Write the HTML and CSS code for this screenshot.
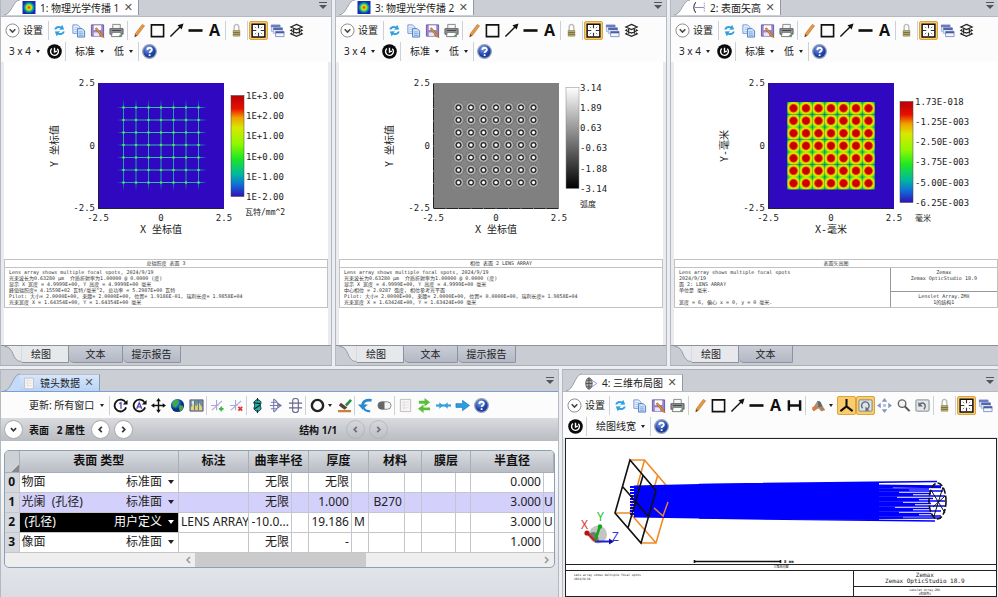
FILE: index.html
```html
<!DOCTYPE html>
<html lang="zh-CN">
<head>
<meta charset="utf-8">
<meta name="viewport" content="width=device-width, initial-scale=1">
<title>OpticStudio</title>
<link rel="stylesheet" href="styles.css">
</head>
<body>
<svg class="defs" aria-hidden="true">
  <defs>
    <radialGradient id="spot"><stop offset="0" stop-color="#d22"/><stop offset=".2" stop-color="#f80"/><stop offset=".4" stop-color="#ce0"/><stop offset=".65" stop-color="#0b9"/><stop offset="1" stop-color="#1a2bb5"/></radialGradient>
    <radialGradient id="ball" cx=".4" cy=".3"><stop offset="0" stop-color="#7fa2ee"/><stop offset="1" stop-color="#1c3fa4"/></radialGradient>
    <radialGradient id="earth" cx=".35" cy=".3"><stop offset="0" stop-color="#9be3ff"/><stop offset=".5" stop-color="#1f78d0"/><stop offset="1" stop-color="#0a2f80"/></radialGradient>
    <linearGradient id="rainbow" x2="0" y2="1"><stop offset="0" stop-color="#b80008"/><stop offset=".13" stop-color="#e81000"/><stop offset=".22" stop-color="#f0a000"/><stop offset=".32" stop-color="#d8e800"/><stop offset=".48" stop-color="#90f800"/><stop offset=".62" stop-color="#20e820"/><stop offset=".78" stop-color="#00b8a0"/><stop offset=".88" stop-color="#1070d8"/><stop offset="1" stop-color="#3010b8"/></linearGradient>
    <linearGradient id="gray" x2="0" y2="1"><stop offset="0" stop-color="#fff"/><stop offset="1" stop-color="#000"/></linearGradient>
    <linearGradient id="beamH" gradientUnits="userSpaceOnUse" x1="117" y1="0" x2="207" y2="0"><stop offset="0" stop-color="#08b8b8" stop-opacity="0"/><stop offset=".08" stop-color="#18a8b8"/><stop offset=".5" stop-color="#38c89c"/><stop offset=".92" stop-color="#18a8b8"/><stop offset="1" stop-color="#08b8b8" stop-opacity="0"/></linearGradient>
    <linearGradient id="beamV" gradientUnits="userSpaceOnUse" x1="0" y1="99" x2="0" y2="191"><stop offset="0" stop-color="#08b8b8" stop-opacity="0"/><stop offset=".1" stop-color="#1898c0"/><stop offset=".5" stop-color="#28a8a8"/><stop offset=".9" stop-color="#1898c0"/><stop offset="1" stop-color="#08b8b8" stop-opacity="0"/></linearGradient>
    <radialGradient id="lens" r=".707"><stop offset=".34" stop-color="#c80000"/><stop offset=".44" stop-color="#e83c00"/><stop offset=".52" stop-color="#f4c800"/><stop offset=".64" stop-color="#c8f000"/><stop offset=".78" stop-color="#60e010"/><stop offset="1" stop-color="#009880"/></radialGradient>

    <symbol id="i-chev" viewBox="0 0 16 16"><circle cx="8" cy="8" r="7" fill="#fff" stroke="#888"/><path d="M5 6.700l3 3 3-3" fill="none" stroke="#444" stroke-width="1.600"/></symbol>
    <symbol id="i-refresh" viewBox="0 0 16 16"><path d="M2.500 7c.5-3 4-4.800 7-3.200L11 2l2 5-5.500.2 1.500-1.500C7 4.800 5.500 5.200 4.500 7zM13.500 9c-.5 3-4 4.800-7 3.200L5 14 3 9l5.500-.2L7 10.300c2 .9 3.500.5 4.500-1.300z" fill="#2f9fe0"/></symbol>
    <symbol id="i-copy" viewBox="0 0 16 16"><path d="M2 2h5l2.500 2.500V11H2z" fill="#eaf3ff" stroke="#6a93cf"/><path d="M3.500 5h4M3.500 7h4M3.500 9h4" stroke="#a8c4e8"/><path d="M7 6h5l2.500 2.500V15H7z" fill="#cfe2fa" stroke="#4a7cc4"/><path d="M8.500 9.500h4M8.500 11.500h4.500M8.500 13.200h4.500" stroke="#7ea5dc"/></symbol>
    <symbol id="i-save" viewBox="0 0 16 16"><path d="M1.500 2h13v12h-13z" fill="#9a86c8" stroke="#6a5aa2"/><path d="M4 2.500h8v5H4z" fill="#fff"/><path d="M4 10h6v4H4z" fill="#e8e4f4"/><path d="M7 5l7 8.500 1 2-2.500-.8L5.500 6z" fill="#e69a3c" stroke="#9a5a24" stroke-width=".7"/></symbol>
    <symbol id="i-print" viewBox="0 0 16 16"><path d="M4 6V1.500h8V6" fill="#f6f6f6" stroke="#888"/><path d="M1 6h14v6H1z" fill="#8f9296" stroke="#5c5f63"/><path d="M3 8h10" stroke="#444"/><path d="M3.500 10h9l1 4.500h-11z" fill="#fff" stroke="#777"/><path d="M11 13.300h2" stroke="#3a3" stroke-width="1.500"/></symbol>
    <symbol id="i-pencil" viewBox="0 0 16 16"><path d="M12 1.500l2.500 1.500-7.500 10L4 15l.5-3.500z" fill="#e79a45" stroke="#b4661e" stroke-width=".6"/><path d="M4.500 12l2 1.300L4 15z" fill="#543"/></symbol>
    <symbol id="i-rect" viewBox="0 0 16 16"><path d="M1.500 2h13v12.500h-13z" fill="none" stroke="#111" stroke-width="1.700"/></symbol>
    <symbol id="i-arrow" viewBox="0 0 16 16"><path d="M1.500 14.500L12 4" stroke="#111" stroke-width="1.500"/><path d="M15.500.5l-2 6.500L9 2.500z" fill="#111"/></symbol>
    <symbol id="i-line" viewBox="0 0 16 16"><path d="M.5 8h15" stroke="#111" stroke-width="2.800"/></symbol>
    <symbol id="i-h" viewBox="0 0 16 16"><path d="M2 2.500v11M14 2.500v11M2 8h12" stroke="#111" stroke-width="2.600"/></symbol>
    <symbol id="i-lock" viewBox="0 0 16 16"><path d="M5.500 8V4.500a2.500 3 0 0 1 5 0V8" fill="none" stroke="#bbb" stroke-width="1.500"/><path d="M4.500 8h7v6h-7z" fill="#c2b46e" stroke="#8a8050" stroke-width=".7"/><path d="M4.500 10h7M4.500 12h7" stroke="#6a6340"/></symbol>
    <symbol id="i-fit" viewBox="0 0 16 16"><path d="M1.200 1.200h13.600v13.600H1.200z" fill="#fff" stroke="#111" stroke-width="1.600"/><path d="M8 2v3.600M8 10.400V14M2 8h3.600M10.400 8H14" stroke="#333" stroke-width="1.200"/><path d="M4 4l1.500 1.500M12 4l-1.500 1.500M4 12l1.500-1.500M12 12l-1.500-1.500" stroke="#777"/></symbol>
    <symbol id="i-win" viewBox="0 0 16 16"><path d="M1.500 2h9v7h-9z" fill="#eef2fb" stroke="#a6b3d8"/><path d="M1 2h10v2.500H1z" fill="#6a7cc0"/><path d="M3.500 5h9.500v6H3.500z" fill="#dfe6f6" stroke="#a6b3d8"/><path d="M3.500 5h10v2.500h-10z" fill="#5366ac"/><path d="M6 9h9v5.500H6z" fill="#f4f6fc" stroke="#8494c8"/><path d="M6 9h9v2H6z" fill="#485ca6"/></symbol>
    <symbol id="i-layers" viewBox="0 0 16 16"><path d="M8 1.500l6 2.800-6 2.800-6-2.800zM3.500 7L2 8l6 2.800L14 8l-1.500-1M3.500 10.500L2 11.500l6 2.800 6-2.800-1.500-1M5 6.500v5M11 6.500v5" fill="none" stroke="#222" stroke-width="1.300"/></symbol>
    <symbol id="i-auto" viewBox="0 0 16 16"><circle cx="8" cy="8" r="7.800" fill="#0a0a0a"/><path d="M5.200 4.800A4.200 4.200 0 1 0 11 5M8 4v4.500l2.500-1" fill="none" stroke="#fff" stroke-width="1.500"/></symbol>
    <symbol id="i-help" viewBox="0 0 16 16"><circle cx="8" cy="8" r="7.300" fill="url(#ball)" stroke="#98a2b8" stroke-width="1.300"/><path d="M5.700 6.300c0-3 4.800-3 4.800-.3 0 1.700-2.400 1.700-2.400 3.700M8.100 11v1.700" fill="none" stroke="#fff" stroke-width="1.900"/></symbol>
    <symbol id="i-spot" viewBox="0 0 16 16"><path d="M0 0h16v16H0z" fill="#1a2bb5"/><circle cx="8" cy="8" r="7.500" fill="url(#spot)"/></symbol>
    <symbol id="i-sag" viewBox="0 0 16 16"><path d="M4 1.500c-3 4-3 9 0 13" fill="none" stroke="#333" stroke-width="1.300"/><path d="M3 8h11" stroke="#6a6ad0"/><path d="M14.500 2v12" stroke="#888" stroke-dasharray="2 1"/></symbol>
    <symbol id="i-3d" viewBox="0 0 16 16"><ellipse cx="5.500" cy="8" rx="4" ry="7" fill="#aaa" stroke="#555"/><path d="M5.500 1v14M1.500 8h8M2.500 4h6M2.500 12h6" stroke="#444"/><path d="M8 3l7 5-7 5" fill="none" stroke="#8a7cd0"/></symbol>
    <symbol id="i-doc" viewBox="0 0 16 16"><path d="M2.500 1.500h11v13h-11z" fill="#f8f6f4" stroke="#bcbcc0"/><path d="M4 4.500h8M4 7.500h8M4 10.500h8M6.500 3v10" stroke="#e2dede"/></symbol>
    <symbol id="i-c1" viewBox="0 0 16 16"><path d="M13.500 5A6.300 6.300 0 1 0 14 10" fill="none" stroke="#111" stroke-width="1.900"/><path d="M15.500 2v5h-5z" fill="#111"/><path d="M6.500 6L8.500 5v6.500" fill="none" stroke="#5048b8" stroke-width="1.400"/></symbol>
    <symbol id="i-ca" viewBox="0 0 16 16"><path d="M13.500 5A6.300 6.300 0 1 0 14 10" fill="none" stroke="#111" stroke-width="1.900"/><path d="M15.500 2v5h-5z" fill="#111"/><path d="M5 11.500L7.700 5l2.700 6.500M6 9.500h3.500" fill="none" stroke="#5048b8" stroke-width="1.400"/></symbol>
    <symbol id="i-cross" viewBox="0 0 16 16"><path d="M8 2v12M2 8h12" stroke="#111" stroke-width="1.500"/><path d="M8 0l2.500 3.500h-5zM8 16l2.500-3.500h-5zM0 8l3.500-2.500v5zM16 8l-3.500-2.500v5z" fill="#111"/></symbol>
    <symbol id="i-globe" viewBox="0 0 16 16"><circle cx="8" cy="8" r="7" fill="url(#earth)"/><path d="M5 2c4-1 5 1 4 3s-1 2-2 4-3 1-4-1 0-4 2-6zM10 8c3-1 4 0 4 2s-2 4-3 4-2-4-1-6z" fill="#3fa845"/></symbol>
    <symbol id="i-pic" viewBox="0 0 16 16"><path d="M1 2h14v12H1z" fill="#6b92a4" stroke="#657"/><path d="M2 10l3-5 3 4 2-5 4 6v3H2z" fill="#e5d27c"/><path d="M3 3h3v4H3z" fill="#cde8f0"/><path d="M6 3v10M10 3v10" stroke="#456878"/></symbol>
    <symbol id="i-add" viewBox="0 0 16 16"><path d="M7 2v11M1 8h8M2 13L13 3" stroke="#aaa6dc" stroke-width="1.200"/><path d="M12 9v5M9.500 11.500h5" stroke="#3eb13e" stroke-width="1.900"/></symbol>
    <symbol id="i-del" viewBox="0 0 16 16"><path d="M7 2v11M1 8h8M2 13L13 3" stroke="#aaa6dc" stroke-width="1.200"/><path d="M10 9.500l4 4M14 9.500l-4 4" stroke="#d33" stroke-width="1.900"/></symbol>
    <symbol id="i-tilt" viewBox="0 0 16 16"><path d="M8 1.500c6 2.500 3 4.500 3 6.500s3 4-3 6.500c-6-2.500-3-4.500-3-6.500s-3-4 3-6.500z" fill="#20b4a4" stroke="#123"/><path d="M8 0v3M8 13v3M4 5l7 1M5 11.500l6-4" stroke="#122" stroke-width="1.200"/></symbol>
    <symbol id="i-lens" viewBox="0 0 16 16"><path d="M5 1v14M5 1c6 4 6 10 0 14M1 8h12M2 4.500h6l5 3.500-5 3.500H2" fill="none" stroke="#7a7ab0" stroke-width="1.200"/></symbol>
    <symbol id="i-field" viewBox="0 0 16 16"><path d="M5 2v12M11 2v12M5 2c1-2 5-2 6 0M5 14c1 2 5 2 6 0M1 5.500h14M1 10.500h14" fill="none" stroke="#66668c" stroke-width="1.200"/></symbol>
    <symbol id="i-ring" viewBox="0 0 16 16"><circle cx="8" cy="8" r="6" fill="none" stroke="#222" stroke-width="2.600"/></symbol>
    <symbol id="i-brush" viewBox="0 0 16 16"><path d="M8.500 7l5.500-6 2 2-5.500 6z" fill="#2b8d46"/><path d="M4 5l7 5-3 2.500L2 8z" fill="#594330"/><path d="M1 14h14" stroke="#c98038" stroke-width="2.400"/></symbol>
    <symbol id="i-undo" viewBox="0 0 16 16"><path d="M14.500 2.500C8 1.500 5 4 5 8" fill="none" stroke="#2a8acb" stroke-width="3"/><path d="M0 7h10.500L5 12.500z" fill="#2a8acb"/><path d="M6 11c1.500 2.500 4 3.300 7 3" stroke="#2a8acb" stroke-width="2.200" fill="none"/></symbol>
    <symbol id="i-toggle" viewBox="0 0 16 16"><rect x="1" y="4" width="14" height="8" rx="4" fill="#f4f4f4" stroke="#888"/><path d="M5 4h3v8H5a4 4 0 0 1 0-8z" fill="#666"/></symbol>
    <symbol id="i-swap" viewBox="0 0 16 16"><path d="M2 4.500h7M14 11.500H6" stroke="#5cbf3c" stroke-width="3"/><path d="M8 0l6 4.500L8 9zM7 7l-6 4.500L7 16z" fill="#5cbf3c"/></symbol>
    <symbol id="i-both" viewBox="0 0 16 16"><path d="M0 8h16" stroke="#35a0e0" stroke-width="2.400"/><path d="M7.500 8L3.500 4.500v7zM8.500 8l4-3.500v7z" fill="#35a0e0"/></symbol>
    <symbol id="i-right" viewBox="0 0 16 16"><path d="M1 6h7V2.500L15.500 8 8 13.500V10H1z" fill="#2b9de0" stroke="#1974b8" stroke-width=".7"/></symbol>
    <symbol id="i-view" viewBox="0 0 16 16"><path d="M1 12l6-9 3 1 5 9-4 1-4-4-4 4z" fill="#a09684"/><path d="M7 3l3 1 2 5-4 1z" fill="#5c6a6c"/><path d="M1 10l5-2 2 3-5 3z" fill="#e0793c"/><path d="M10 9l5 3-4 2z" fill="#bd7a47"/></symbol>
    <symbol id="i-axis" viewBox="0 0 16 16"><path d="M8 9V1M8 9l-6.500 5M8 9l6.500 5" stroke="#111" stroke-width="2.200"/></symbol>
    <symbol id="i-rot" viewBox="0 0 16 16"><rect x="1" y="2" width="14" height="12" rx="1" fill="#dce3e6" stroke="#788"/><path d="M5 11a4 4 0 1 1 5 .5" fill="none" stroke="#667" stroke-width="1.500"/><path d="M8 9v5l4-1z" fill="#667"/></symbol>
    <symbol id="i-back" viewBox="0 0 16 16"><rect x="1" y="2" width="14" height="12" rx="1" fill="#e4e8ea" stroke="#788"/><path d="M5 6.500c4-3 8 1 4.500 5.500" fill="none" stroke="#667" stroke-width="1.500"/><path d="M3.500 4v5h5z" fill="#667"/></symbol>
    <symbol id="i-pan" viewBox="0 0 16 16"><path d="M8 0l3 4H5zM8 16l3-4H5zM0 8l4-3v6zM16 8l-4-3v6z" fill="#8299bd"/><path d="M6.500 6.500h3v3h-3z" fill="#b1bfd6"/></symbol>
    <symbol id="i-mag" viewBox="0 0 16 16"><circle cx="6.500" cy="6" r="4" fill="#f4f4f4" stroke="#666" stroke-width="1.500"/><path d="M9.500 9l5 5" stroke="#555" stroke-width="2.200"/></symbol>
  </defs>
</svg>

<main class="desk">
  <div class="row plots">
    <section class="panel">
      <header class="tabs">
        <svg class="slant" viewBox="0 0 18 18" preserveAspectRatio="none"><path class="fill" d="M0 18C9 17 10 0 18 0V18z"/><path class="edge" d="M0 18C9 17 10 0 18 0"/></svg>
        <div class="tab"><svg class="ic"><use href="#i-spot"/></svg><span>1: 物理光学传播 1</span><button class="x" aria-label="关闭">✕</button></div>
        <button class="drop" aria-label="窗口列表"></button>
      </header>
      <div class="bar">
        <button class="set"><svg class="ic"><use href="#i-chev"/></svg>设置</button><i class="sep"></i>
        <button class="t" aria-label="刷新"><svg class="ic"><use href="#i-refresh"/></svg></button>
        <button class="t" aria-label="复制"><svg class="ic"><use href="#i-copy"/></svg></button>
        <button class="t" aria-label="保存"><svg class="ic"><use href="#i-save"/></svg></button>
        <button class="t" aria-label="打印"><svg class="ic"><use href="#i-print"/></svg></button><i class="sep"></i>
        <button class="t" aria-label="铅笔"><svg class="ic"><use href="#i-pencil"/></svg></button>
        <button class="t" aria-label="矩形"><svg class="ic"><use href="#i-rect"/></svg></button>
        <button class="t" aria-label="箭头"><svg class="ic"><use href="#i-arrow"/></svg></button>
        <button class="t" aria-label="直线"><svg class="ic"><use href="#i-line"/></svg></button>
        <button class="t letter">A</button><i class="sep"></i>
        <button class="t" aria-label="锁定"><svg class="ic"><use href="#i-lock"/></svg></button><i class="sep"></i>
        <button class="t on" aria-label="适合窗口"><svg class="ic"><use href="#i-fit"/></svg></button>
        <button class="t" aria-label="窗口"><svg class="ic"><use href="#i-win"/></svg></button>
        <button class="t" aria-label="图层"><svg class="ic"><use href="#i-layers"/></svg></button>
      </div>
      <div class="bar second">
        <span class="pick"><select aria-label="布局"><option>3 x 4</option></select></span>
        <button class="t auto" aria-label="自动更新"><svg class="ic"><use href="#i-auto"/></svg></button><i class="sep"></i>
        <span class="pick"><select aria-label="样式"><option>标准</option></select></span>
        <span class="pick"><select aria-label="质量"><option>低</option></select></span><i class="sep"></i>
        <button class="t" aria-label="帮助"><svg class="ic"><use href="#i-help"/></svg></button>
      </div>
      <div class="page">
        <svg class="plot" viewBox="4 62 324 197">
          <rect x="98" y="83" width="126" height="126" fill="#3008c0"/>
          <path d="M98.500 84v124.500H224" fill="none" stroke="#222" stroke-dasharray="11.500 1"/>
          <path d="M117 107.500h90v.01M117 120h90v.01M117 132.500h90v.01M117 145h90v.01M117 157.500h90v.01M117 170h90v.01M117 182.500h90v.01" fill="none" stroke="url(#beamH)"/>
          <path d="M123.500 99v92h.01M136 99v92h.01M148.500 99v92h.01M161 99v92h.01M173.500 99v92h.01M186 99v92h.01M198.500 99v92h.01" fill="none" stroke="url(#beamV)"/>
          <path id="stars" d="M123.500 107.500h.01M136 107.500h.01M148.500 107.500h.01M161 107.500h.01M173.500 107.500h.01M186 107.500h.01M198.500 107.500h.01" stroke="#50e850" stroke-width="2.600" stroke-linecap="round"/>
          <use href="#stars" y="12.500"/><use href="#stars" y="25"/><use href="#stars" y="37.500"/><use href="#stars" y="50"/><use href="#stars" y="62.500"/><use href="#stars" y="75"/>
          <rect x="231" y="95.500" width="13" height="101" fill="url(#rainbow)" stroke="#444" stroke-width=".5"/>
          <g class="num"><text x="246" y="99">1E+3.00</text><text x="246" y="119">1E+2.00</text><text x="246" y="139">1E+1.00</text><text x="246" y="160">1E+0.00</text><text x="246" y="180">1E-1.00</text><text x="246" y="200">1E-2.00</text></g>
          <text class="unit" x="245" y="215">瓦特/mm^2</text>
          <g class="num end"><text x="95" y="86">2.5</text><text x="95" y="149">0</text><text x="95" y="211">-2.5</text></g>
          <g class="num mid"><text x="98" y="221">-2.5</text><text x="161" y="221">0</text><text x="224" y="221">2.5</text></g>
          <g class="axis"><text x="161" y="233">X 坐标值</text><text transform="translate(58 146) rotate(-90)">Y 坐标值</text></g>
        </svg>
        <div class="note">
          <h2>总辐照度 表面 3</h2>
          <pre>Lens array shows multiple focal spots, 2024/9/19
光束波长为0.63280 μm  介质折射率为1.00000 @ 0.0000 (度)
显示 X 宽度 = 4.9999E+00, Y 高度 = 4.9999E+00 毫米
峰值辐照度= 4.1559E+02 瓦特/毫米^2, 总功率 = 5.2987E+00 瓦特
Pilot: 大小= 2.0000E+00, 束腰= 2.0000E+00, 位置= 1.9186E-01, 瑞利长度= 1.9858E+04
光束宽度 X = 1.64354E+00, Y = 1.64354E+00 毫米</pre>
        </div>
      </div>
      <nav class="views">
        <svg class="lead" viewBox="0 0 18 18"><path class="fill" d="M0 0C11 0 7 17 18 17V0z"/><path class="edge" d="M0 .5C11 .5 7 16.500 18 16.500"/></svg>
        <button class="cur">绘图</button><button>文本</button><button class="wide">提示报告</button>
      </nav>
    </section>

    <section class="panel">
      <header class="tabs">
        <svg class="slant" viewBox="0 0 18 18" preserveAspectRatio="none"><path class="fill" d="M0 18C9 17 10 0 18 0V18z"/><path class="edge" d="M0 18C9 17 10 0 18 0"/></svg>
        <div class="tab"><svg class="ic"><use href="#i-spot"/></svg><span>3: 物理光学传播 2</span><button class="x" aria-label="关闭">✕</button></div>
        <button class="drop" aria-label="窗口列表"></button>
      </header>
      <div class="bar">
        <button class="set"><svg class="ic"><use href="#i-chev"/></svg>设置</button><i class="sep"></i>
        <button class="t" aria-label="刷新"><svg class="ic"><use href="#i-refresh"/></svg></button>
        <button class="t" aria-label="复制"><svg class="ic"><use href="#i-copy"/></svg></button>
        <button class="t" aria-label="保存"><svg class="ic"><use href="#i-save"/></svg></button>
        <button class="t" aria-label="打印"><svg class="ic"><use href="#i-print"/></svg></button><i class="sep"></i>
        <button class="t" aria-label="铅笔"><svg class="ic"><use href="#i-pencil"/></svg></button>
        <button class="t" aria-label="矩形"><svg class="ic"><use href="#i-rect"/></svg></button>
        <button class="t" aria-label="箭头"><svg class="ic"><use href="#i-arrow"/></svg></button>
        <button class="t" aria-label="直线"><svg class="ic"><use href="#i-line"/></svg></button>
        <button class="t letter">A</button><i class="sep"></i>
        <button class="t" aria-label="锁定"><svg class="ic"><use href="#i-lock"/></svg></button><i class="sep"></i>
        <button class="t on" aria-label="适合窗口"><svg class="ic"><use href="#i-fit"/></svg></button>
        <button class="t" aria-label="窗口"><svg class="ic"><use href="#i-win"/></svg></button>
        <button class="t" aria-label="图层"><svg class="ic"><use href="#i-layers"/></svg></button>
      </div>
      <div class="bar second">
        <span class="pick"><select aria-label="布局"><option>3 x 4</option></select></span>
        <button class="t auto" aria-label="自动更新"><svg class="ic"><use href="#i-auto"/></svg></button><i class="sep"></i>
        <span class="pick"><select aria-label="样式"><option>标准</option></select></span>
        <span class="pick"><select aria-label="质量"><option>低</option></select></span><i class="sep"></i>
        <button class="t" aria-label="帮助"><svg class="ic"><use href="#i-help"/></svg></button>
      </div>
      <div class="page">
        <svg class="plot" viewBox="4 62 324 197">
          <rect x="98" y="83" width="126" height="126" fill="#808080"/>
          <path d="M98.500 84v124.500H224" fill="none" stroke="#222" stroke-dasharray="11.500 1"/>
          <rect x="117" y="101" width="88" height="88" fill="#868686"/>
          <g id="rings">
            <g id="ring" fill="none"><circle cx="123.500" cy="107.500" r="5.600" stroke="#555" stroke-width=".7" stroke-dasharray="1 1.500"/><circle cx="123.500" cy="107.500" r="3.900" stroke="#c8c8c8" stroke-width=".9"/><circle cx="123.500" cy="107.500" r="2.500" fill="#666" stroke="#1c1c1c"/><circle cx="123.500" cy="107.500" r="1.500" fill="#fff"/></g>
            <use href="#ring" x="12.500"/><use href="#ring" x="25"/><use href="#ring" x="37.500"/><use href="#ring" x="50"/><use href="#ring" x="62.500"/><use href="#ring" x="75"/>
          </g>
          <use href="#rings" y="12.500"/><use href="#rings" y="25"/><use href="#rings" y="37.500"/><use href="#rings" y="50"/><use href="#rings" y="62.500"/><use href="#rings" y="75"/>
          <rect x="231" y="87.500" width="13" height="101" fill="url(#gray)" stroke="#888" stroke-width=".5"/>
          <g class="num"><text x="245" y="91">3.14</text><text x="245" y="111">1.89</text><text x="245" y="131">0.63</text><text x="245" y="151">-0.63</text><text x="245" y="172">-1.88</text><text x="245" y="192">-3.14</text></g>
          <text class="unit" x="245" y="207">弧度</text>
          <g class="num end"><text x="95" y="86">2.5</text><text x="95" y="149">0</text><text x="95" y="211">-2.5</text></g>
          <g class="num mid"><text x="98" y="221">-2.5</text><text x="161" y="221">0</text><text x="224" y="221">2.5</text></g>
          <g class="axis"><text x="161" y="233">X 坐标值</text><text transform="translate(58 146) rotate(-90)">Y 坐标值</text></g>
        </svg>
        <div class="note">
          <h2>相位 表面 2 LENS ARRAY</h2>
          <pre>Lens array shows multiple focal spots, 2024/9/19
光束波长为0.63280 μm  介质折射率为1.00000 @ 0.0000 (度)
显示 X 宽度 = 4.9999E+00, Y 高度 = 4.9999E+00 毫米
中心相位 = 2.0287 弧度, 相位参考光平面
Pilot: 大小= 2.0000E+00, 束腰= 2.0000E+00, 位置= 0.0000E+00, 瑞利长度= 1.9858E+04
光束宽度 X = 1.63424E+00, Y = 1.63424E+00 毫米</pre>
        </div>
      </div>
      <nav class="views">
        <svg class="lead" viewBox="0 0 18 18"><path class="fill" d="M0 0C11 0 7 17 18 17V0z"/><path class="edge" d="M0 .5C11 .5 7 16.500 18 16.500"/></svg>
        <button class="cur">绘图</button><button>文本</button><button class="wide">提示报告</button>
      </nav>
    </section>

    <section class="panel last">
      <header class="tabs">
        <svg class="slant" viewBox="0 0 18 18" preserveAspectRatio="none"><path class="fill" d="M0 18C9 17 10 0 18 0V18z"/><path class="edge" d="M0 18C9 17 10 0 18 0"/></svg>
        <div class="tab"><svg class="ic"><use href="#i-sag"/></svg><span>2: 表面矢高</span><button class="x" aria-label="关闭">✕</button></div>
        <button class="drop" aria-label="窗口列表"></button>
      </header>
      <div class="bar">
        <button class="set"><svg class="ic"><use href="#i-chev"/></svg>设置</button><i class="sep"></i>
        <button class="t" aria-label="刷新"><svg class="ic"><use href="#i-refresh"/></svg></button>
        <button class="t" aria-label="复制"><svg class="ic"><use href="#i-copy"/></svg></button>
        <button class="t" aria-label="保存"><svg class="ic"><use href="#i-save"/></svg></button>
        <button class="t" aria-label="打印"><svg class="ic"><use href="#i-print"/></svg></button><i class="sep"></i>
        <button class="t" aria-label="铅笔"><svg class="ic"><use href="#i-pencil"/></svg></button>
        <button class="t" aria-label="矩形"><svg class="ic"><use href="#i-rect"/></svg></button>
        <button class="t" aria-label="箭头"><svg class="ic"><use href="#i-arrow"/></svg></button>
        <button class="t" aria-label="直线"><svg class="ic"><use href="#i-line"/></svg></button>
        <button class="t letter">A</button><i class="sep"></i>
        <button class="t" aria-label="锁定"><svg class="ic"><use href="#i-lock"/></svg></button><i class="sep"></i>
        <button class="t on" aria-label="适合窗口"><svg class="ic"><use href="#i-fit"/></svg></button>
        <button class="t" aria-label="窗口"><svg class="ic"><use href="#i-win"/></svg></button>
        <button class="t" aria-label="图层"><svg class="ic"><use href="#i-layers"/></svg></button>
      </div>
      <div class="bar second">
        <span class="pick"><select aria-label="布局"><option>3 x 4</option></select></span>
        <button class="t auto" aria-label="自动更新"><svg class="ic"><use href="#i-auto"/></svg></button><i class="sep"></i>
        <span class="pick"><select aria-label="样式"><option>标准</option></select></span>
        <span class="pick"><select aria-label="质量"><option>低</option></select></span><i class="sep"></i>
        <button class="t" aria-label="帮助"><svg class="ic"><use href="#i-help"/></svg></button>
      </div>
      <div class="page">
        <svg class="plot" viewBox="4 62 324 197">
          <rect x="98" y="83" width="126" height="126" fill="#3008c0"/>
          <path d="M98.500 84v124.500H224" fill="none" stroke="#222" stroke-dasharray="11.500 1"/>
          <g id="cells">
            <rect id="cell" x="117.250" y="102" width="12.500" height="12.500" fill="url(#lens)"/>
            <use href="#cell" x="12.500"/><use href="#cell" x="25"/><use href="#cell" x="37.500"/><use href="#cell" x="50"/><use href="#cell" x="62.500"/><use href="#cell" x="75"/>
          </g>
          <use href="#cells" y="12.500"/><use href="#cells" y="25"/><use href="#cells" y="37.500"/><use href="#cells" y="50"/><use href="#cells" y="62.500"/><use href="#cells" y="75"/>
          <rect x="230" y="101.500" width="13" height="101" fill="url(#rainbow)" stroke="#444" stroke-width=".5"/>
          <g class="num"><text x="245" y="105">1.73E-018</text><text x="245" y="125">-1.25E-003</text><text x="245" y="145">-2.50E-003</text><text x="245" y="165">-3.75E-003</text><text x="245" y="186">-5.00E-003</text><text x="245" y="206">-6.25E-003</text></g>
          <text class="unit" x="245" y="221">毫米</text>
          <g class="num end"><text x="95" y="86">2.5</text><text x="95" y="149">0</text><text x="95" y="211">-2.5</text></g>
          <g class="num mid"><text x="98" y="221">-2.5</text><text x="161" y="221">0</text><text x="224" y="221">2.5</text></g>
          <g class="axis"><text x="161" y="233">X-毫米</text><text transform="translate(58 146) rotate(-90)">Y-毫米</text></g>
        </svg>
        <div class="note split">
          <h2>表面矢高图</h2>
          <pre>Lens array shows multiple focal spots
2024/9/19
面 2: LENS ARRAY
单位是 毫米.

宽度 = 6, 偏心 x = 0, y = 0 毫米.</pre>
          <div class="who"><p>Zemax<br>Zemax OpticStudio 18.9</p><p>Lenslet Array.ZMX<br>1的结构1</p></div>
        </div>
      </div>
      <nav class="views">
        <svg class="lead" viewBox="0 0 18 18"><path class="fill" d="M0 0C11 0 7 17 18 17V0z"/><path class="edge" d="M0 .5C11 .5 7 16.500 18 16.500"/></svg>
        <button class="cur">绘图</button><button>文本</button>
      </nav>
    </section>
  </div>

  <div class="row lower">
    <section class="panel editor">
      <header class="tabs blue">
        <svg class="slant" viewBox="0 0 18 18" preserveAspectRatio="none"><path class="fill" d="M0 18C9 17 10 0 18 0V18z"/><path class="edge" d="M0 18C9 17 10 0 18 0"/></svg>
        <div class="tab"><svg class="ic"><use href="#i-doc"/></svg><span>镜头数据</span><button class="x" aria-label="关闭">✕</button></div>
        <button class="drop" aria-label="窗口列表"></button>
      </header>
      <div class="bar">
        <span class="pick update"><select aria-label="更新"><option>更新: 所有窗口</option></select></span><i class="sep"></i>
        <button class="t" aria-label="更新一次"><svg class="ic"><use href="#i-c1"/></svg></button>
        <button class="t" aria-label="全部更新"><svg class="ic"><use href="#i-ca"/></svg></button>
        <button class="t" aria-label="移动"><svg class="ic"><use href="#i-cross"/></svg></button>
        <button class="t" aria-label="地球"><svg class="ic"><use href="#i-globe"/></svg></button>
        <button class="t" aria-label="图片"><svg class="ic"><use href="#i-pic"/></svg></button><i class="sep"></i>
        <button class="t" aria-label="添加坐标"><svg class="ic"><use href="#i-add"/></svg></button>
        <button class="t" aria-label="删除坐标"><svg class="ic"><use href="#i-del"/></svg></button><i class="sep"></i>
        <button class="t" aria-label="倾斜"><svg class="ic"><use href="#i-tilt"/></svg></button>
        <button class="t" aria-label="透镜"><svg class="ic"><use href="#i-lens"/></svg></button>
        <button class="t" aria-label="视场"><svg class="ic"><use href="#i-field"/></svg></button><i class="sep"></i>
        <button class="t menu" aria-label="孔径"><svg class="ic"><use href="#i-ring"/></svg></button>
        <button class="t" aria-label="清理"><svg class="ic"><use href="#i-brush"/></svg></button><i class="sep"></i>
        <button class="t" aria-label="撤销"><svg class="ic"><use href="#i-undo"/></svg></button>
        <button class="t" aria-label="开关"><svg class="ic"><use href="#i-toggle"/></svg></button><i class="sep"></i>
        <button class="t" aria-label="文档"><svg class="ic"><use href="#i-doc"/></svg></button>
        <button class="t" aria-label="交换"><svg class="ic"><use href="#i-swap"/></svg></button>
        <button class="t" aria-label="展开"><svg class="ic"><use href="#i-both"/></svg></button>
        <button class="t" aria-label="前进"><svg class="ic"><use href="#i-right"/></svg></button>
        <button class="t" aria-label="帮助"><svg class="ic"><use href="#i-help"/></svg></button>
      </div>
      <div class="props">
        <button class="round" aria-label="展开属性"><svg viewBox="0 0 20 20"><path d="M7 8.500l3 3 3-3"/></svg></button>
        <b class="title">表面&nbsp;&nbsp; 2 属性</b>
        <button class="round" aria-label="上一个"><svg viewBox="0 0 20 20"><path d="M11.500 7l-3 3 3 3"/></svg></button>
        <button class="round" aria-label="下一个"><svg viewBox="0 0 20 20"><path d="M8.500 7l3 3-3 3"/></svg></button>
        <b class="conf">结构 1/1</b>
        <button class="round" disabled aria-label="上一结构"><svg viewBox="0 0 20 20"><path d="M11.500 7l-3 3 3 3"/></svg></button>
        <button class="round" disabled aria-label="下一结构"><svg viewBox="0 0 20 20"><path d="M8.500 7l3 3-3 3"/></svg></button>
      </div>
      <div class="sheet">
        <table>
          <colgroup><col class="w14"><col><col class="w70"><col class="w43"><col class="w17"><col class="w43"><col class="w17"><col class="w36"><col class="w17"><col class="w34"><col class="w15"><col class="w73"><col class="w10"></colgroup>
          <thead><tr><th class="corner"></th><th>表面 类型</th><th>标注</th><th colspan="2">曲率半径</th><th colspan="2">厚度</th><th colspan="2">材料</th><th colspan="2">膜层</th><th colspan="2">半直径</th></tr></thead>
          <tbody>
            <tr><th>0</th><td><div class="kind"><span>物面</span><span class="pick"><select aria-label="表面 0 类型"><option>标准面</option></select></span></div></td><td></td><td class="r">无限</td><td></td><td class="r">无限</td><td></td><td></td><td></td><td></td><td></td><td class="r">0.000</td><td class="flag"></td></tr>
            <tr class="stop"><th>1</th><td><div class="kind"><span>光阑&nbsp; (孔径)</span><span class="pick"><select aria-label="表面 1 类型"><option>标准面</option></select></span></div></td><td></td><td class="r">无限</td><td></td><td class="r">1.000</td><td></td><td class="r">B270</td><td></td><td></td><td></td><td class="r">3.000</td><td class="flag">U</td></tr>
            <tr><th>2</th><td class="sel"><div class="kind"><span>&nbsp;(孔径)</span><span class="pick"><select aria-label="表面 2 类型"><option>用户定义</option></select></span></div></td><td>LENS ARRAY</td><td class="r">-10.0...</td><td></td><td class="r">19.186</td><td>M</td><td></td><td></td><td></td><td></td><td class="r">3.000</td><td class="flag">U</td></tr>
            <tr><th>3</th><td><div class="kind"><span>像面</span><span class="pick"><select aria-label="表面 3 类型"><option>标准面</option></select></span></div></td><td></td><td class="r">无限</td><td></td><td class="r">-</td><td></td><td></td><td></td><td></td><td></td><td class="r">1.000</td><td class="flag"></td></tr>
          </tbody>
        </table>
        <div class="scroll"><svg viewBox="0 0 14 14"><path d="M9 4L6 7l3 3"/></svg><i></i><svg viewBox="0 0 14 14"><path d="M5 4l3 3-3 3"/></svg></div>
      </div>
    </section>

    <section class="panel layout3d">
      <header class="tabs">
        <svg class="slant" viewBox="0 0 18 18" preserveAspectRatio="none"><path class="fill" d="M0 18C9 17 10 0 18 0V18z"/><path class="edge" d="M0 18C9 17 10 0 18 0"/></svg>
        <div class="tab"><svg class="ic"><use href="#i-3d"/></svg><span>4: 三维布局图</span><button class="x" aria-label="关闭">✕</button></div>
        <button class="drop" aria-label="窗口列表"></button>
      </header>
      <div class="bar">
        <button class="set"><svg class="ic"><use href="#i-chev"/></svg>设置</button><i class="sep"></i>
        <button class="t" aria-label="刷新"><svg class="ic"><use href="#i-refresh"/></svg></button>
        <button class="t" aria-label="复制"><svg class="ic"><use href="#i-copy"/></svg></button>
        <button class="t" aria-label="保存"><svg class="ic"><use href="#i-save"/></svg></button>
        <button class="t" aria-label="打印"><svg class="ic"><use href="#i-print"/></svg></button><i class="sep"></i>
        <button class="t" aria-label="铅笔"><svg class="ic"><use href="#i-pencil"/></svg></button>
        <button class="t" aria-label="矩形"><svg class="ic"><use href="#i-rect"/></svg></button>
        <button class="t" aria-label="箭头"><svg class="ic"><use href="#i-arrow"/></svg></button>
        <button class="t" aria-label="直线"><svg class="ic"><use href="#i-line"/></svg></button>
        <button class="t letter">A</button>
        <button class="t" aria-label="尺寸"><svg class="ic"><use href="#i-h"/></svg></button><i class="sep"></i>
        <button class="t menu" aria-label="视图"><svg class="ic"><use href="#i-view"/></svg></button>
        <button class="t on" aria-label="坐标轴"><svg class="ic"><use href="#i-axis"/></svg></button>
        <button class="t on" aria-label="旋转"><svg class="ic"><use href="#i-rot"/></svg></button>
        <button class="t" aria-label="平移"><svg class="ic"><use href="#i-pan"/></svg></button>
        <button class="t" aria-label="缩放"><svg class="ic"><use href="#i-mag"/></svg></button>
        <button class="t" aria-label="还原"><svg class="ic"><use href="#i-back"/></svg></button><i class="sep"></i>
        <button class="t" aria-label="锁定"><svg class="ic"><use href="#i-lock"/></svg></button><i class="sep"></i>
        <button class="t on" aria-label="适合窗口"><svg class="ic"><use href="#i-fit"/></svg></button>
        <button class="t" aria-label="窗口"><svg class="ic"><use href="#i-win"/></svg></button>
      </div>
      <div class="bar second">
        <button class="t auto" aria-label="自动更新"><svg class="ic"><use href="#i-auto"/></svg></button><i class="sep"></i>
        <span class="pick"><select aria-label="线宽"><option>绘图线宽</option></select></span><i class="sep"></i>
        <button class="t" aria-label="帮助"><svg class="ic"><use href="#i-help"/></svg></button>
      </div>
      <div class="drawing">
        <svg class="scene" viewBox="567 439 430 125">
          <g fill="none" stroke="#f08a24" stroke-width="1.600"><path d="M631 460h14.500L672 491l-15 52h-15M645.500 460L631 513h-15M631 513l26 30M658.500 476l-4 14M657 490.500h15"/></g>
          <path d="M635 485.500L700 484l180-1.500v37.500L700 518.500 635 517.500z" fill="#0000ff"/>
          <path d="M634 486v30" stroke="#00f" stroke-width="6" stroke-dasharray="2 1"/>
          <path d="M700 484.500l238-3M760 484l182 2M870 486.500l72 1M870 489h60M870 491h74M870 493.500h62M870 496h76M870 498.500h64M870 501h76M870 503.500h62M870 506h76M870 508.500h60M870 511h72M870 513.500h62M870 516h72M700 518l236 3M780 518.500l162-.5" stroke="#0000ff" stroke-width="1.700"/>
          <path d="M870 487.500h24M870 490h40M870 492.500h30M870 495h44M870 497.500h28M870 500h50M870 502.500h34M870 505h46M870 507.500h26M870 510h44M870 512.500h30M870 515h50M870 517.500h34" stroke="#0000ff" stroke-width="2"/>
          <path d="M655 508l9 8 5-14" fill="none" stroke="#f08a24" stroke-width="1.400"/>
          <g fill="none" stroke="#111" stroke-width="1.600"><path d="M631 460l26 30.500-15 52.500-26-30zM623.500 486.500l26 30M644 475.500L629 528"/><ellipse cx="938.500" cy="501" rx="8.500" ry="18" stroke-dasharray="6 2"/><path d="M932 490l14 23M944 487l-9 29M934 507l12-11" stroke-width="1"/></g>
          <circle cx="599" cy="534.500" r="9" fill="#c4c4c4"/><path d="M590 534q8-6 10 7h-5z" fill="#777"/>
          <path d="M596 541.500h17" stroke="#2020d0" stroke-width="2"/><path d="M610 538.500l5 3-5 3z" fill="#1010a0"/>
          <path d="M596 541l5-15" stroke="#10a818" stroke-width="2.600"/><circle cx="601" cy="526.500" r="2.200" fill="#10a818"/>
          <path d="M596 541l-8-8" stroke="#d02020" stroke-width="2.400"/><circle cx="588" cy="533" r="2.600" fill="#b01818"/>
          <g class="dir"><text x="582" y="529" fill="#e03030">X</text><text x="598" y="521" fill="#20c030">Y</text><text x="613" y="541" fill="#3030e0">Z</text></g>
          <path d="M695 561.500h87M695.500 560v3M781.500 560v3" stroke="#111" stroke-width="1.600"/><text class="scale" x="785" y="563">8 mm</text>
        </svg>
        <h2>三维布局图</h2>
        <div class="info"><p class="tiny">Lens array shows multiple focal spots<br>2024/9/19</p><div class="who"><p>Zemax<br>Zemax OpticStudio 18.9</p><p class="tiny">Lenslet Array.ZMX<br>1的结构1</p></div></div>
      </div>
    </section>
  </div>
</main>
</body>
</html>
```
FILE: styles.css
```css
* { box-sizing: border-box; }

body {
  margin: 0;
  background: #eceef2;
  color: #222;
  font: 10px/14px "Noto Sans", "Noto Sans CJK SC", sans-serif;
}

button, select {
  margin: 0;
  padding: 0;
  border: 0;
  background: none;
  color: inherit;
  font: inherit;
}

select { appearance: none; }
h2, p, pre { margin: 0; font-weight: 400; }
svg { display: block; flex: none; }
.defs { position: absolute; width: 0; height: 0; }

.desk {
  display: grid;
  grid-template-rows: 366fr 228fr;
  gap: 3px;
  min-height: 100vh;
}
.row { display: grid; gap: 3px; min-width: 0; }
.plots { grid-template-columns: 332fr 332fr 328fr; }
.lower { grid-template-columns: 559fr 436fr; }

.panel {
  display: flex;
  flex-direction: column;
  min-width: 0;
  overflow: hidden;
  background: #e9ebef;
  border: solid #b4b8c0;
  border-width: 0 1px;
}
.plots .panel { border-bottom: 1px solid #a9adb5; }
.lower .panel { border-top: 1px solid #a9adb5; }
.last, .layout3d { border-right: 0; }

/* Document tabs */
.tabs {
  display: flex;
  align-items: stretch;
  height: 17px;
  padding: 0 0 1px 3px;
  background: #cbced4;
  border-bottom: 1px solid #b5b9c1;
}
.lower .tabs { height: 22px; padding: 4px 0 0 3px; }
.tabs .slant { width: 16px; height: 100%; overflow: visible; }
.slant .fill { fill: #fff; }
.edge { fill: none; stroke: #9298a3; }
.tab {
  display: flex;
  align-items: center;
  gap: 4px;
  padding: 0 5px 0 2px;
  background: #fff;
  border-right: 1px solid #9298a3;
  white-space: nowrap;
}
.tab .ic { width: 14px; height: 13px; }
.lower .tab { border-top: 1px solid #b9bec8; }
.x { width: 10px; color: #555; font: 11px/12px "DejaVu Sans", sans-serif; }
.blue { border-bottom-color: #7c9fd2; }
.blue .tab { background: linear-gradient(#d6e6fc, #b9d3f7); }
.blue .fill { fill: #c4daf9; }
.drop {
  align-self: center;
  width: 8px;
  height: 7px;
  margin: 0 4px 4px auto;
  border-top: 1px solid #555;
}
.drop::before {
  content: "";
  display: block;
  margin-top: 1px;
  border: 4px solid transparent;
  border-top-color: #555;
  border-bottom: 0;
}

/* Toolbars */
.bar {
  display: flex;
  align-items: center;
  height: 26px;
  padding-left: 4px;
  background: #fcfcfd;
}
.second { height: 19px; padding-bottom: 3px; }
.ic { width: 15px; height: 15px; }
.set { display: flex; align-items: center; gap: 3px; width: 42px; white-space: nowrap; }
.layout3d .set { width: 41px; }
.t {
  display: flex;
  flex: none;
  align-items: center;
  justify-content: center;
  width: 19px;
  height: 19px;
}
.t .ic { width: 15px; height: 15px; }
.letter { font: bold 16px/19px "Open Sans", sans-serif; color: #111; }
.on { background: #fbcb6c; border: 1px solid #d9a441; border-radius: 2px; }
.sep { flex: none; width: 1px; height: 19px; margin: 0 1px; background: #ccd0d8; }
.editor .sep { margin: 0 1px 0 0; }
.pick { display: flex; align-items: center; gap: 5px; white-space: nowrap; }
.pick::after, .menu::after {
  content: "";
  border: 2px solid transparent;
  border-top: 3px solid #222;
  border-bottom: 0;
}
.second .pick { margin: 0 4px; }
.second .pick + .pick { margin-left: 6px; }
.second .sep { margin-left: 1px; }
.second .sep + .pick { margin-left: 8px; }
.second .auto { width: 20px; }
.layout3d .second { padding-left: 2px; }
.menu { width: 28px; gap: 3px; }
.layout3d .menu { width: 30px; }
.menu::after { order: 2; }
.update { padding: 0 5px 0 24px; }
.update select { width: 66px; }

/* Plot pages */
.page { flex: 1; margin: 0 3px; background: #fff; }
.last .page { margin-right: 0; }
.plot { width: 100%; height: 197px; }
.plot text { font-family: "DejaVu Sans Mono", "Noto Sans CJK SC", monospace; fill: #222; }
.num { font-size: 9px; }
.unit { font-size: 8px; }
.axis { font-size: 10px; text-anchor: middle; }
.mid { text-anchor: middle; }
.end { text-anchor: end; }
.note {
  border: 1px solid #c2c2c2;
  color: #333;
  font: 5px/6px "DejaVu Sans Mono", "Noto Sans CJK SC", monospace;
}
.note h2 {
  height: 8px;
  border-bottom: 1px solid #c2c2c2;
  font: inherit;
  line-height: 7px;
  text-align: center;
}
.note pre { height: 39px; padding: 1px 4px; font: inherit; }
.split { display: grid; grid-template-columns: 2fr 1fr; }
.split h2 { grid-column: 1 / 3; }
.who { display: grid; grid-template-rows: 3fr 2fr; border-left: 1px solid #999; text-align: center; }
.who p { padding-top: 1px; }
.who p + p { border-top: 1px solid #999; }

.views {
  display: flex;
  height: 20px;
  padding: 0 0 2px 3px;
  background: #c9ccd2;
  border-top: 1px solid #8d929c;
}
.views .lead { width: 18px; height: 17px; }
.lead .fill { fill: #e6e8ec; }
.views button {
  width: 54px;
  height: 17px;
  background: linear-gradient(#c9cdd6, #b3b8c4);
  border: 1px solid #8d929c;
  border-width: 0 1px 1px 0;
  border-radius: 0 0 2px 5px;
}
.views .cur { width: 47px; padding-right: 8px; background: #e6e8ec; border-radius: 0; }
.views .wide { width: 58px; }

/* Lens data editor */
.editor { background: linear-gradient(#fff 75px, #dadde3); }
.props {
  display: flex;
  align-items: center;
  gap: 6px;
  height: 23px;
  padding-left: 3px;
  background: linear-gradient(#d9dbdf, #b9bcc2);
}
.props b { color: #111; }
.round { width: 19px; height: 19px; background: #fff; border: 1px solid #aaa; border-radius: 50%; }
.round path { fill: none; stroke: #333; stroke-width: 2; }
.round:disabled { background: none; opacity: .6; }
.round + .round { margin-left: -2px; }
.conf { margin-left: 160px; }
.props .conf + .round { margin-left: 3px; }

.sheet {
  margin: 9px 3px 0;
  overflow: hidden;
  background: #eee;
  border: 1px solid #8d9fb4;
  border-radius: 5px;
  font-size: 12px;
  line-height: 18px;
}
table { width: 100%; table-layout: fixed; border-collapse: collapse; }
th, td {
  height: 20px;
  padding: 0 2px;
  overflow: hidden;
  border: solid #c4c6cc;
  border-width: 0 1px 1px 0;
  white-space: nowrap;
}
th { background: #d5d8de; color: #111; padding: 0; }
thead th { height: 21px; background: linear-gradient(#d9dce0, #b8bcc4); border-color: #a9adb6; }
td { background: #fff; text-align: left; }
td.r { text-align: right; }
td.flag { padding: 0; border-right: 0; }
.stop td { background: #d3d0fb; }
td.sel { background: #000; color: #fff; }
thead .corner { background: linear-gradient(135deg, #cdd0d5 78%, #888 78%); }
.kind { display: flex; justify-content: space-between; padding-right: 2px; }
.kind .pick::after { border-width: 4px 3px 0; border-top-color: currentColor; }
.w10 { width: 10px; }
.w14 { width: 14px; }
.w15 { width: 15px; }
.w17 { width: 17px; }
.w34 { width: 34px; }
.w36 { width: 36px; }
.w43 { width: 43px; }
.w70 { width: 70px; }
.w73 { width: 73px; }
.scroll { display: flex; height: 14px; margin-left: 32%; }
.scroll svg { width: 14px; height: 14px; }
.scroll i { width: 46%; margin-right: auto; background: #cbcbcb; }
.scroll path { fill: none; stroke: #999; stroke-width: 1.5; }

/* 3D layout */
.drawing {
  display: flex;
  flex: 1;
  flex-direction: column;
  margin: 1px 1px 0 2px;
  background: #fff;
  border: 1px solid #222;
}
.scene { flex: 1 1 110px; width: 100%; height: 110px; min-height: 0; }
.dir { font: 12px "Noto Sans", sans-serif; }
.scale { font: bold 4px "DejaVu Sans Mono", monospace; }
.drawing h2 {
  height: 7px;
  border: solid #222;
  border-width: 1px 0;
  font-size: 3px;
  line-height: 5px;
  text-align: center;
}
.info {
  display: grid;
  grid-template-columns: 2fr 1fr;
  font: 6px/6px "DejaVu Sans Mono", "Noto Sans CJK SC", monospace;
}
.info > p { padding: 2px 8px; }
.info .who { grid-template-rows: 15px 10px; border-color: #222; }
.info .who p + p { border-color: #222; }
.info .tiny { font-size: 3px; line-height: 4px; }
```
